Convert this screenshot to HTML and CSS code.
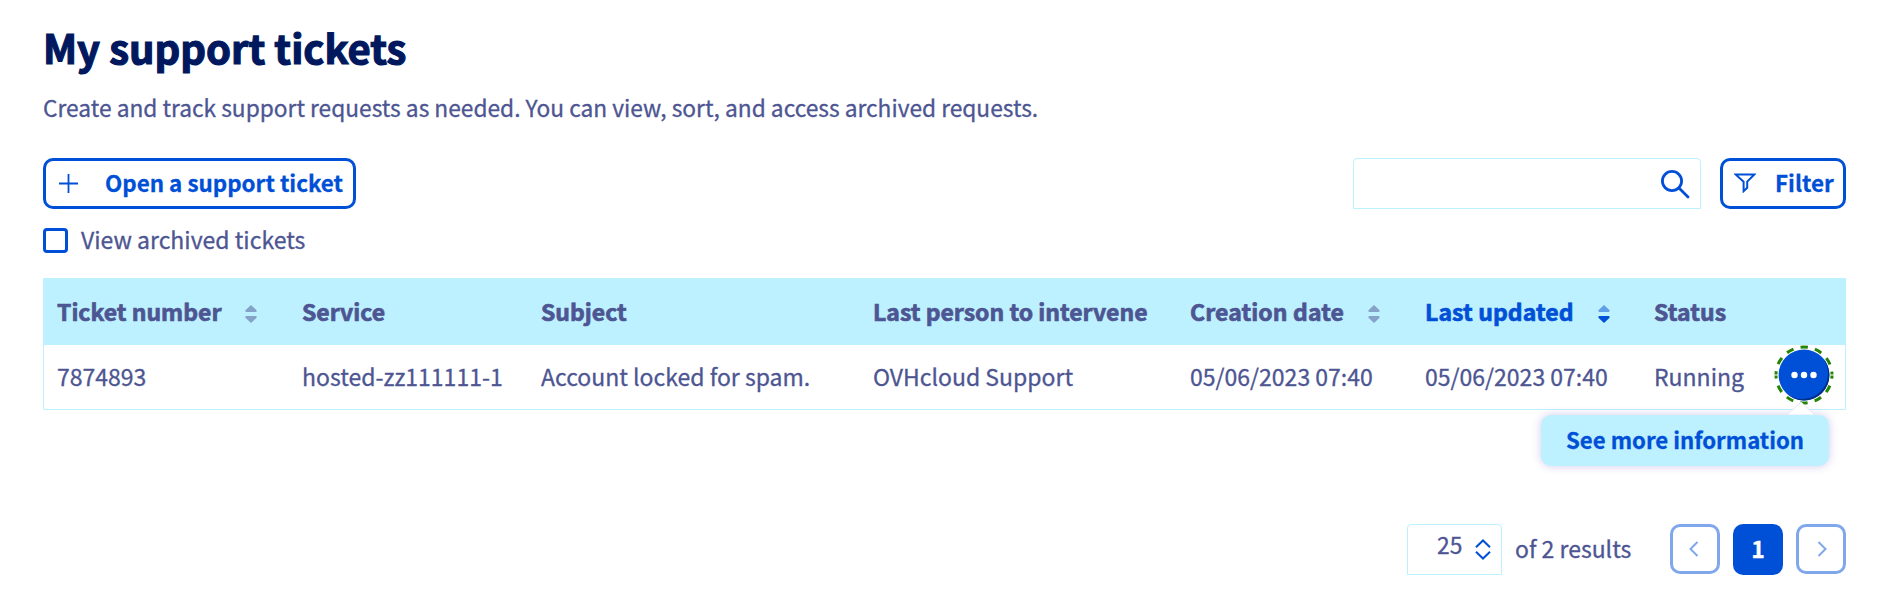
FILE: index.html
```html
<!DOCTYPE html>
<html lang="en">
<head>
<meta charset="utf-8">
<title>My support tickets</title>
<link rel="stylesheet" href="styles.css">
</head>
<body>
<main class="page">
  <h1 class="title">My support tickets</h1>
  <p class="intro">Create and track support requests as needed. You can view, sort, and access archived requests.</p>

  <div class="toolbar">
    <button class="btn btn-open">
      <svg class="icon-plus" width="19" height="19" viewBox="0 0 19 19"><path d="M9.500 0v19M0 9.500h19"/></svg>
      <span class="label">Open a support ticket</span>
    </button>
    <div class="tools">
      <div class="search">
        <svg width="29" height="29" viewBox="0 0 29 29"><circle cx="11" cy="11" r="9.600"/><path d="M18 18l9 9"/></svg>
      </div>
      <button class="btn btn-filter">
        <svg class="icon-filter" width="22" height="20" viewBox="0 0 22 20"><path d="M1.600 1.400h18.800l-7.200 7.200v6.200l-3.600 3.400V8.800z"/></svg>
        <span class="label">Filter</span>
      </button>
    </div>
  </div>

  <label class="archived"><span class="box"></span><span class="label">View archived tickets</span></label>

  <div class="table">
    <div class="row head">
      <span class="cell">Ticket number<svg class="sort" width="12" height="18" viewBox="0 0 12 18"><path d="M6 0l5.600 5.200q.4 1.800-1 1.800H1.400q-1.400 0-1-1.800z"/><path d="M6 18l5.600-5.200q.4-1.800-1-1.800H1.400q-1.400 0-1 1.800z"/></svg></span>
      <span class="cell">Service</span>
      <span class="cell">Subject</span>
      <span class="cell">Last person to intervene</span>
      <span class="cell date">Creation date<svg class="sort" width="12" height="18" viewBox="0 0 12 18"><path d="M6 0l5.600 5.200q.4 1.800-1 1.800H1.400q-1.400 0-1-1.800z"/><path d="M6 18l5.600-5.200q.4-1.800-1-1.800H1.400q-1.400 0-1 1.800z"/></svg></span>
      <span class="cell date sorted">Last updated<svg class="sort desc" width="12" height="18" viewBox="0 0 12 18"><path class="up" d="M6 0l5.600 5.200q.4 1.800-1 1.800H1.400q-1.400 0-1-1.800z"/><path d="M6 18l5.600-5.200q.4-1.800-1-1.800H1.400q-1.400 0-1 1.800z"/></svg></span>
      <span class="cell date">Status</span>
      <span></span>
    </div>
    <div class="row body">
      <span class="cell">7874893</span>
      <span class="cell">hosted-zz111111-1</span>
      <span class="cell">Account locked for spam.</span>
      <span class="cell">OVHcloud Support</span>
      <span class="cell">05/06/2023 07:40</span>
      <span class="cell">05/06/2023 07:40</span>
      <span class="cell">Running</span>
      <div class="actions">
        <svg class="more" width="60" height="60" viewBox="0 0 60 60">
          <circle class="ring" cx="30" cy="30" r="28"/>
          <path class="seam" d="M0 30h5M55 30h5"/>
          <circle class="disc" cx="30" cy="30" r="25.400"/>
          <path class="disc-shade" d="M12 48A25.400 25.400 0 0 0 48 12A25.550 25.550 0 0 1 12 48z"/>
          <circle class="dot" cx="20.500" cy="30" r="3.200"/><circle class="dot" cx="30" cy="30" r="3.200"/><circle class="dot" cx="39.500" cy="30" r="3.200"/>
        </svg>
        <div class="tooltip">
          <svg class="arrow" width="28" height="13" viewBox="0 0 28 13"><path d="M0 13L14 0L28 13z"/></svg>
          <span>See more information</span>
        </div>
      </div>
    </div>
  </div>

  <div class="pager">
    <div class="size"><span>25</span><svg width="16" height="21" viewBox="0 0 16 21"><path d="M1 8.300L8 1.500l7 6.800M1 12.700l7 6.800 7-6.800"/></svg></div>
    <span class="count">of 2 results</span>
    <div class="pages">
      <button class="pg prev"><svg width="10" height="16" viewBox="0 0 10 16"><path d="M8.500 1L1.500 8l7 7"/></svg></button>
      <button class="pg current">1</button>
      <button class="pg next"><svg width="10" height="16" viewBox="0 0 10 16"><path d="M1.500 1l7 7-7 7"/></svg></button>
    </div>
  </div>
</main>
</body>
</html>
```
FILE: styles.css
```css
* { box-sizing: border-box; }
body {
  margin: 0;
  background: #fff;
  color: #4d5592;
  font-family: "Noto Sans CJK SC", "Noto Sans", sans-serif;
  font-size: 23px;
  line-height: 34px;
  -webkit-text-stroke: .3px currentColor;
}
svg { display: block; flex: none; fill: none; stroke: #0050d7; }
button { font: inherit; color: inherit; padding: 0; margin: 0; }
.page { padding: 17px 38px 0 43px; height: 614px; }
.title { margin: 0; height: 60px; line-height: 60px; font-size: 40px; font-weight: 700; color: #00185e; white-space: nowrap; -webkit-text-stroke-width: 1.200px; }
.intro { margin: 14px 0 0; height: 34px; font-size: 22.720px; white-space: nowrap; }
.toolbar { display: flex; justify-content: space-between; margin-top: 33px; height: 51px; }
.tools { display: flex; gap: 19px; }
.label { margin-bottom: 4px; }
.btn {
  display: flex; align-items: center; height: 51px;
  border: 3px solid #0050d7; border-radius: 10px; background: #fff;
  color: #0050d7; font-size: 22.400px; font-weight: 700; white-space: nowrap;
}
.btn-open { width: 313px; padding-left: 13px; gap: 27px; }
.btn-filter { width: 126px; padding-left: 11px; gap: 19px; }
.icon-plus { stroke-width: 1.800; }
.icon-filter { stroke-width: 2; margin-top: -1px; }
.search {
  display: flex; justify-content: flex-end; align-items: center;
  width: 348px; height: 51px; padding: 1px 10px 0 0;
  border: 1px solid #bef1ff; border-radius: 4px 4px 0 0;
}
.search svg { stroke-width: 2.800; stroke-linecap: round; }
.archived { display: flex; align-items: center; gap: 13px; height: 25px; margin-top: 19px; white-space: nowrap; }
.box { width: 25px; height: 25px; border: 3px solid #0050d7; border-radius: 4px; }
.table { margin-top: 25px; height: 132px; border: 1px solid #bef1ff; }
.row { display: grid; grid-template-columns: 245px 239px 332px 317px 235px 229px 119px 1fr; padding-left: 13px; align-items: center; white-space: nowrap; }
.head { height: 66px; background: #bef1ff; font-weight: 700; -webkit-text-stroke-width: .7px; }
.head .cell { margin-top: -2px; }
.body { height: 64px; }
.body .cell { margin-top: -2px; }
.cell { display: flex; align-items: center; }
.date { letter-spacing: .1px; }
.sorted { color: #0050d7; }
.sort { margin: 5px 0 0 24px; stroke: none; fill: #85a3c9; }
.desc { fill: #0050d7; }
.desc .up { fill: #5f9fea; }
.actions { position: relative; height: 60px; }
.more { position: absolute; left: 1.300px; top: -2px; }
.ring { stroke: #268403; stroke-width: 3; stroke-dasharray: 7.400 7.260; stroke-dashoffset: 3.700; }
.seam { stroke: #fff; stroke-width: 1.200; }
.disc-shade { fill: #002f86; stroke: none; }
.disc { fill: #0050d7; stroke: none; }
.dot { fill: #fff; stroke: none; }
.tooltip {
  position: absolute; top: 68px; right: 16px; width: 288px; height: 51px;
  border-radius: 10px; background: #bef1ff; color: #0050d7; font-size: 22.200px; font-weight: 700;
  padding: 7px 0 0 25px; box-shadow: 0 0 10px rgba(90, 70, 190, .28);
}
.arrow { position: absolute; top: -13px; right: 14px; fill: #fff; stroke: #e6e4f6; }
.pager { display: flex; justify-content: flex-end; margin-top: 114px; height: 51px; }
.size { display: flex; align-items: center; width: 95px; height: 51px; padding-left: 29px; gap: 13px; border: 1px solid #bef1ff; border-radius: 4px 4px 0 0; }
.size span { margin-top: -10px; font-size: 22.800px; }
.size svg { stroke-width: 2; }
.count { width: 116px; margin: 7px 39px 0 13px; white-space: nowrap; }
.pages { display: flex; gap: 13px; }
.pg { display: flex; align-items: center; justify-content: center; width: 50px; height: 50px; border-radius: 10px; border: 3px solid #80a7eb; background: #fff; }
.pg svg { stroke: #80a7eb; stroke-width: 2; }
.prev { padding-right: 2px; }
.next { padding-left: 2px; }
.current { height: 51px; border: 0; padding-bottom: 3px; background: #0050d7; color: #fff; font-weight: 700; }
```
